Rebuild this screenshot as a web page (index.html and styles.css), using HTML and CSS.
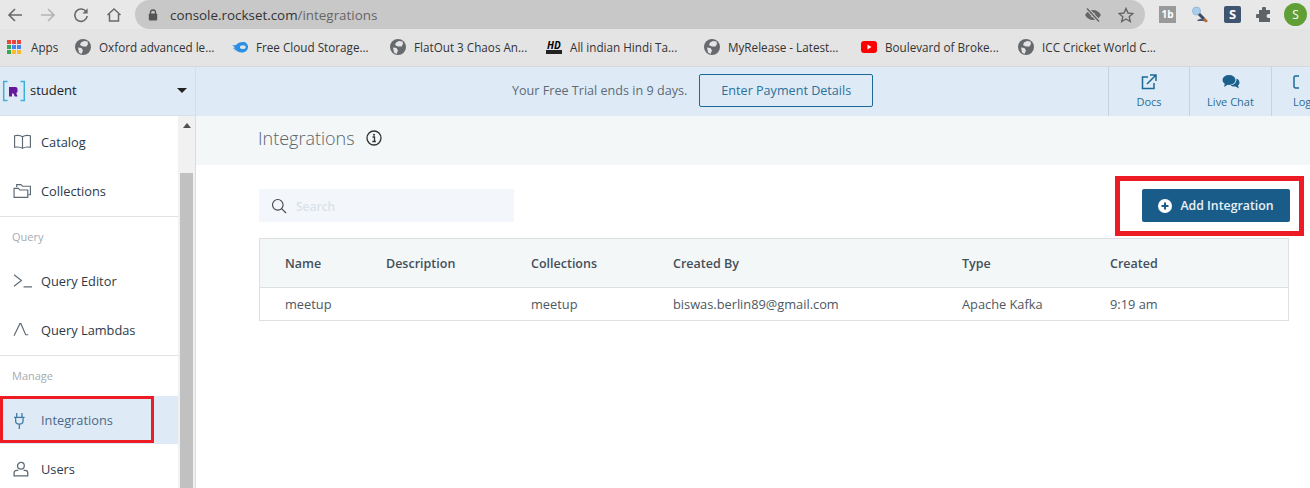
FILE: index.html
```html
<!DOCTYPE html>
<html>
<head>
<title>Integrations</title>
<meta http-equiv="content-type" content="text/html; charset=utf-8">
<link rel="stylesheet" href="styles.css">
</head>
<body>

<div class="toolbar">
	<div class="nav">
		<svg width="16" height="16" viewBox="0 0 16 16" class="nav_icon"><path d="M15 8H2M8 2L2 8l6 6" fill="none" stroke="#6a6a6a" stroke-width="1.6"/></svg>
		<svg width="16" height="16" viewBox="0 0 16 16" class="nav_icon"><path d="M1 8h13M8 2l6 6-6 6" fill="none" stroke="#b4b4b4" stroke-width="1.6"/></svg>
		<svg width="16" height="16" viewBox="0 0 16 16" class="nav_icon"><path d="M13.5 5.2A6.2 6.2 0 1 0 14.2 9" fill="none" stroke="#6a6a6a" stroke-width="1.6"/><path d="M14.6 1.2v5.2H9.4z" fill="#6a6a6a"/></svg>
		<svg width="16" height="16" viewBox="0 0 16 16" class="nav_icon"><path d="M1.5 8L8 2l6.5 6M3.5 7v7h9V7" fill="none" stroke="#6a6a6a" stroke-width="1.5"/></svg>
	</div>
	<div class="omnibox">
		<svg width="10" height="12" viewBox="0 0 10 12" class="lock"><path d="M2.5 5V3.500a2.500 2.500 0 0 1 5 0V5" fill="none" stroke="#555" stroke-width="1.3"/><rect x="0.8" y="4.6" width="8.4" height="6.8" rx="1" fill="#555"/></svg>
		<span class="url">console.rockset.com<span class="url_path">/integrations</span></span>
		<span class="omni_right">
			<svg width="18" height="16" viewBox="0 0 18 16"><path d="M1 8c2-3.400 4.800-5 8-5s6 1.600 8 5c-2 3.400-4.800 5-8 5s-6-1.600-8-5z" fill="#666"/><circle cx="9" cy="8" r="2.200" fill="#c8c8c8"/><path d="M3 1.500l12 13" stroke="#c8c8c8" stroke-width="3.400"/><path d="M3 1.500l12 13" stroke="#666" stroke-width="1.500"/></svg>
			<svg width="16" height="16" viewBox="0 0 16 16"><path d="M8 1.500l2 4.500 4.900.5-3.700 3.200 1.100 4.800L8 12l-4.300 2.500 1.100-4.800L1.100 6.500 6 6z" fill="none" stroke="#666" stroke-width="1.400"/></svg>
		</span>
	</div>
	<div class="extensions">
		<span class="ext ext_tb">1b</span>
		<svg width="18" height="18" viewBox="0 0 18 18" class="ext_search"><circle cx="5.500" cy="5" r="4" fill="#a9cdec" stroke="#9bb9d6" stroke-width="1"/><path d="M8 8l5 5" stroke="#3c4a63" stroke-width="3"/><path d="M11 14l3-2 3 3-2 1.500z" fill="#b5673a"/><path d="M6 14l6-2 1 3H7z" fill="#4a5a78"/></svg>
		<span class="ext ext_s">S</span>
		<svg width="16" height="16" viewBox="0 0 16 16"><path d="M6 1.500a2 2 0 0 1 4 0V3h4v4h-1.500a2 2 0 0 0 0 4H14v4H3v-4H1.500a2 2 0 0 1 0-4H3V3h3z" fill="#5f6368"/></svg>
		<span class="avatar">S</span>
	</div>
</div>

<div class="bookmarks">
	<span class="bm bm_apps">
		<span class="apps_grid"><i class="r"></i><i class="r"></i><i class="r"></i><i class="g"></i><i class="b"></i><i class="b"></i><i class="g"></i><i class="y"></i><i class="y"></i></span>
		Apps
	</span>
	<span class="bm bm_oxford"><svg class="globe" viewBox="0 0 16 16"><use href="#globe"/></svg>Oxford advanced le...</span>
	<span class="bm bm_cloud">
		<svg class="bm_icon" viewBox="0 0 16 16"><path d="M0 6.500L4 6C6 3.500 9 2.500 12 3c3 .6 4.200 3 4 5.500-.3 3-3 5-6.500 5-2.500 0-4.500-1-5.500-2.500L2 11.500 3.500 9.800 0.800 9.500 3 8z" fill="#2b8fe6"/><ellipse cx="10.800" cy="8.200" rx="2.800" ry="1.900" fill="#e4e4e4"/></svg>Free Cloud Storage...
	</span>
	<span class="bm bm_flat"><svg class="globe" viewBox="0 0 16 16"><use href="#globe"/></svg>FlatOut 3 Chaos An...</span>
	<span class="bm bm_hd"><span class="hd_icon">HD</span>All indian Hindi Ta...</span>
	<span class="bm bm_rel"><svg class="globe" viewBox="0 0 16 16"><use href="#globe"/></svg>MyRelease - Latest...</span>
	<span class="bm bm_yt">
		<svg class="bm_icon" viewBox="0 0 16 16"><rect y="2" width="16" height="12" rx="3" fill="#f00"/><path d="M6.500 5.500v5l4-2.500z" fill="#fff"/></svg>Boulevard of Broke...
	</span>
	<span class="bm"><svg class="globe" viewBox="0 0 16 16"><use href="#globe"/></svg>ICC Cricket World C...</span>
</div>

<svg width="0" height="0" class="defs">
	<symbol id="globe" viewBox="0 0 16 16">
		<circle cx="8" cy="8" r="8" fill="#666a6e"/>
		<path d="M12.500 2.500L9 2 6 3.500 5 6l3 1.500 3.500 0 1.500-2.500zM3 8.500l3.500.5 1.500 2.500L6.500 15 4 13.500z" fill="#e4e4e4"/>
	</symbol>
</svg>

<div class="app">
	<div class="sidebar">
		<div class="org">
			<svg width="24" height="24" viewBox="0 0 24 24" class="logo">
				<path d="M5.500 3.500H1.700v19h3.800M18.500 3.500h3.800v19h-3.800" fill="none" stroke="#3fb0d6" stroke-width="1.500"/>
				<path d="M7 9h6.500a2 2 0 0 1 2 2v3l-1.200 1 1.200 3.500h-2.800l-1.200-3h-1.500v3H7z" fill="#66189c"/>
			</svg>
			<span class="org_name">student</span>
			<span class="caret"></span>
		</div>
		<div class="side_body">
			<div class="menu">
				<a class="item item_first">
					<svg viewBox="0 0 18 18" class="item_icon"><path d="M9 4.500C7 3 4 3 1.500 3.500v11C4 14 7 14 9 15.500c2-1.500 5-1.500 7.500-1v-11C14 3 11 3 9 4.500zM9 4.500v11" fill="none" stroke="#5d6a75" stroke-width="1.100"/></svg>
					Catalog
				</a>
				<a class="item">
					<svg viewBox="0 0 18 18" class="item_icon"><path d="M3.500 6V3.500h4l1.500 1.500h7.500v8H14" fill="none" stroke="#5d6a75" stroke-width="1.100"/><path d="M1 7h4l1.500 1.500H14v7H1z" fill="none" stroke="#5d6a75" stroke-width="1.100"/></svg>
					Collections
				</a>
				<div class="group_label">Query</div>
				<a class="item">
					<svg viewBox="0 0 18 18" class="item_icon"><path d="M1 3.500L8 9l-7 5.500M10 15h8" fill="none" stroke="#5d6a75" stroke-width="1.100"/></svg>
					Query Editor
				</a>
				<a class="item">
					<svg viewBox="0 0 18 18" class="item_icon"><path d="M1 15L6.500 3.500H7.500L12 14h2.500" fill="none" stroke="#5d6a75" stroke-width="1.100"/></svg>
					Query Lambdas
				</a>
				<div class="group_label group_manage">Manage</div>
				<a class="item item_active">
					<svg viewBox="0 0 18 18" class="item_icon"><path d="M3.500 2v4M8.500 2v4M1 6h10M2.500 6v3.500c0 2 1.500 3 3.500 3s3.500-1 3.500-3V6M6 12.500V17" fill="none" stroke="#3f7ba4" stroke-width="1.200"/></svg>
					Integrations
				</a>
				<a class="item">
					<svg viewBox="0 0 18 18" class="item_icon"><circle cx="7.500" cy="6.500" r="3.200" fill="none" stroke="#5d6a75" stroke-width="1.200"/><path d="M5 10.800H3.500a2.500 2.500 0 0 0-2.500 2.500V16h13v-2.700a2.500 2.500 0 0 0-2.500-2.500H10" fill="none" stroke="#5d6a75" stroke-width="1.200"/></svg>
					Users
				</a>
			</div>
			<div class="scrollbar">
				<span class="scroll_up"></span>
				<div class="scroll_thumb"></div>
			</div>
		</div>
	</div>

	<div class="main">
		<div class="topbar">
			<span class="trial">Your Free Trial ends in 9 days.</span>
			<a class="pay_btn">Enter Payment Details</a>
			<div class="top_links">
				<a class="top_link">
					<svg width="16" height="16" viewBox="0 0 16 16"><path d="M7 3H1.500v11.500H13V9M6 10L14.500 1.500M9 1h6v6" fill="none" stroke="#1b6a96" stroke-width="1.500"/></svg>
					Docs
				</a>
				<a class="top_link top_link_chat">
					<svg width="18" height="16" viewBox="0 0 18 16"><ellipse cx="7" cy="6" rx="6.500" ry="5" fill="#1b5f8c"/><path d="M3 9l-1 4 4-2.500z" fill="#1b5f8c"/><path d="M14.500 4.500C16.500 5.500 17.500 7 17.500 8.500c0 1.300-.7 2.300-1.500 3l1 3-3.500-2c-2 .3-4-.2-5-1.300 3-.1 6.500-2.500 6-6.700z" fill="#1b5f8c"/></svg>
					Live Chat
				</a>
				<a class="top_link top_link_cut">
					<svg width="16" height="16" viewBox="0 0 16 16"><path d="M6 2H2.500A1.500 1.500 0 0 0 1 3.500v9A1.500 1.500 0 0 0 2.500 14H6" fill="none" stroke="#1b6a96" stroke-width="1.500"/></svg>
					Logout
				</a>
			</div>
		</div>

		<div class="page_title">
			<span class="title_text">Integrations</span>
			<svg width="16" height="16" viewBox="0 0 16 16"><circle cx="8" cy="8" r="7" fill="none" stroke="#333" stroke-width="1.300"/><circle cx="8" cy="4.800" r="1" fill="#333"/><path d="M6.500 7h2v4.500M6.300 11.500h3.600" fill="none" stroke="#333" stroke-width="1.300"/></svg>
		</div>

		<div class="content">
			<div class="actions">
				<div class="search">
					<svg width="16" height="16" viewBox="0 0 16 16"><circle cx="6.800" cy="6.800" r="5.300" fill="none" stroke="#444" stroke-width="1.100"/><path d="M10.600 10.600L15 15" stroke="#444" stroke-width="1.100"/></svg>
					<span class="search_text">Search</span>
				</div>
				<a class="add_btn">
					<svg width="14" height="14" viewBox="0 0 14 14"><circle cx="7" cy="7" r="7" fill="#fff"/><path d="M7 3.500v7M3.500 7h7" stroke="#1b5c8a" stroke-width="2"/></svg>
					Add Integration
				</a>
			</div>

			<table class="grid">
				<thead>
					<tr><th class="c_name">Name</th><th class="c_desc">Description</th><th class="c_coll">Collections</th><th class="c_by">Created By</th><th class="c_type">Type</th><th>Created</th></tr>
				</thead>
				<tbody>
					<tr><td>meetup</td><td></td><td>meetup</td><td>biswas.berlin89@gmail.com</td><td>Apache Kafka</td><td>9:19 am</td></tr>
				</tbody>
			</table>
		</div>
	</div>
</div>

<!-- red annotation boxes drawn over the screenshot -->
<div class="mark mark_side"></div>
<div class="mark mark_add"></div>

</body>
</html>
```

FILE: styles.css
```css
html, body {
	margin: 0;
	height: 488px;
	overflow: hidden;
}

body {
	position: relative;
	width: 1310px;
	font-family: "Open Sans", "Noto Sans", sans-serif;
	background: white;
}

a {
	display: block;
}

.defs {
	position: absolute;
}

/* browser chrome */

.toolbar {
	display: flex;
	align-items: center;
	height: 29px;
	background: #e8e8e8;
}

.nav {
	display: flex;
	gap: 17px;
	flex: 0 0 135px;
	padding-left: 7px;
	box-sizing: border-box;
}

.omnibox {
	display: flex;
	align-items: center;
	flex: 0 0 1010px;
	height: 29px;
	padding-left: 13px;
	box-sizing: border-box;
	border-radius: 15px;
	background: #c8c8c8;
}

.url {
	margin-left: 12px;
	font-size: 13.4px;
	color: #333;
}

.url_path {
	color: #666;
}

.omni_right {
	display: flex;
	gap: 16px;
	margin-left: auto;
	margin-right: 11px;
}

.extensions {
	display: flex;
	align-items: center;
	gap: 15px;
	padding-left: 14px;
}

.ext {
	display: block;
	width: 17px;
	height: 17px;
	text-align: center;
	color: white;
	font-weight: bold;
}

.ext_tb {
	font-size: 10px;
	line-height: 17px;
	background: #9a9a9a;
}

.ext_s {
	border-radius: 2px;
	font-size: 13px;
	line-height: 17px;
	background: #3e5470;
}

.avatar {
	width: 23px;
	height: 23px;
	margin-left: -3px;
	border-radius: 50%;
	text-align: center;
	color: white;
	font-size: 12px;
	line-height: 23px;
	background: #5f9f35;
}

.bookmarks {
	display: flex;
	align-items: center;
	height: 38px;
	padding: 0 0 2px 7px;
	border-bottom: 1px solid #d5d9dd;
	box-sizing: border-box;
	font-size: 11.7px;
	color: #333;
	background: #e4e4e4;
}

.bm {
	display: flex;
	align-items: center;
	gap: 8px;
	white-space: nowrap;
}

.bm_apps { width: 68px; gap: 10px; }
.bm_oxford { width: 157px; }
.bm_cloud { width: 158px; }
.bm_flat { width: 156px; }
.bm_hd { width: 158px; }
.bm_rel { width: 157px; }
.bm_yt { width: 157px; }

.apps_grid {
	display: grid;
	grid-template-columns: repeat(3, 4px);
	gap: 1px;
}

.apps_grid i {
	display: block;
	height: 4px;
}

.apps_grid .r { background: #e8453c; }
.apps_grid .y { background: #f9bb2d; }
.apps_grid .g { background: #34a853; }
.apps_grid .b { background: #4285f4; }

.globe, .bm_icon {
	width: 16px;
	height: 16px;
}

.hd_icon {
	width: 16px;
	height: 15px;
	font-size: 10px;
	font-weight: bold;
	font-style: italic;
	line-height: 12px;
	text-align: center;
	color: black;
	border-bottom: 4px solid #222;
	box-sizing: border-box;
}

/* rockset console */

.app {
	display: flex;
	height: 421px;
}

.sidebar {
	flex: 0 0 196px;
	border-right: 1px solid #d8dde2;
	box-sizing: border-box;
}

.org {
	display: flex;
	align-items: center;
	height: 49px;
	padding: 0 0 2px 2px;
	border-bottom: 1px solid #d8e2ea;
	box-sizing: border-box;
	background: #deebf7;
}

.org_name {
	margin-left: 4px;
	font-size: 13px;
	color: #222;
}

.caret {
	margin-left: auto;
	margin-right: 8px;
	border-left: 5px solid transparent;
	border-right: 5px solid transparent;
	border-top: 5px solid #222;
}

.side_body {
	display: flex;
	height: 372px;
}

.menu {
	flex: 0 0 178px;
	overflow: hidden;
}

.item {
	display: flex;
	align-items: center;
	height: 49px;
	padding-left: 13px;
	font-size: 12.8px;
	color: #2c3a47;
}

.item_first {
	margin-top: 1px;
}

.item_icon {
	width: 19px;
	height: 19px;
	margin-right: 9px;
}

.group_label {
	height: 40px;
	margin-top: 1px;
	line-height: 40px;
	padding-left: 12px;
	border-top: 1px solid #dfe3e6;
	box-sizing: border-box;
	font-size: 11px;
	color: #a5abb2;
}

.group_manage {
	height: 41px;
}

.item_active {
	height: 48px;
	color: #4a6a85;
	background: #deebf7;
}

.scrollbar {
	flex: 1;
	background: #f1f1f1;
}

.scroll_up {
	display: block;
	width: 0;
	margin: 7px auto 0 auto;
	border-left: 4px solid transparent;
	border-right: 4px solid transparent;
	border-bottom: 5px solid #505050;
}

.scroll_thumb {
	margin: 45px 2px 0 2px;
	height: 320px;
	background: #c1c1c1;
}

.main {
	flex: 1;
	min-width: 0;
}

.topbar {
	display: flex;
	align-items: center;
	height: 49px;
	padding-bottom: 2px;
	box-sizing: border-box;
	font-size: 12.6px;
	background: #deebf7;
}

.trial {
	margin-left: 316px;
	color: #5d6a75;
}

.pay_btn {
	width: 174px;
	height: 33px;
	margin-left: 12px;
	border: 1px solid #1b6a96;
	border-radius: 2px;
	box-sizing: border-box;
	text-align: center;
	line-height: 31px;
	color: #2a7099;
}

.top_links {
	display: flex;
	align-self: stretch;
	margin-left: auto;
	margin-bottom: -2px;
}

.top_link {
	display: flex;
	flex-direction: column;
	align-items: center;
	justify-content: center;
	gap: 4px;
	width: 81px;
	border-left: 1px solid #c8d3dc;
	box-sizing: border-box;
	font-size: 11px;
	font-weight: 500;
	color: #2a6c94;
}

.top_link_chat {
	width: 82px;
}

.top_link_cut {
	width: 39px;
	overflow: hidden;
	align-items: flex-start;
	padding-left: 21px;
}

.page_title {
	display: flex;
	align-items: center;
	gap: 11px;
	height: 49px;
	padding: 0 0 5px 62px;
	box-sizing: border-box;
	background: #f3f7f8;
}

.title_text {
	font-size: 18px;
	font-weight: 300;
	color: #5a636b;
}

.content {
	padding: 24px 21px 0 63px;
}

.actions {
	display: flex;
	justify-content: space-between;
	align-items: flex-start;
}

.search {
	display: flex;
	align-items: center;
	gap: 9px;
	width: 255px;
	height: 33px;
	padding: 1px 0 0 12px;
	box-sizing: border-box;
	background: #f3f7fb;
}

.search_text {
	font-size: 12px;
	font-weight: 600;
	color: #dbe2e9;
}

.add_btn {
	display: flex;
	align-items: center;
	justify-content: center;
	gap: 8px;
	width: 148px;
	height: 33px;
	margin-right: -1px;
	border-radius: 2px;
	font-size: 12.3px;
	font-weight: 600;
	color: #e8f0f6;
	background: #195c8a;
}

.grid {
	width: 100%;
	margin-top: 16px;
	border-collapse: collapse;
	border: 1px solid #dce0e3;
	font-size: 12.5px;
	text-align: left;
}

.grid th {
	height: 48px;
	padding: 0;
	border-bottom: 1px solid #dce0e3;
	font-weight: 600;
	color: #444f59;
	background: #f3f7f8;
}

.grid td {
	height: 32px;
	padding: 0;
	font-size: 12.8px;
	color: #4d5862;
}

.grid th:first-child, .grid td:first-child {
	padding-left: 25px;
}

.c_name { width: 101px; }
.c_desc { width: 145px; }
.c_coll { width: 142px; }
.c_by { width: 289px; }
.c_type { width: 148px; }

.mark {
	position: absolute;
	box-sizing: border-box;
	border: 5px solid #ed1c24;
}

.mark_side {
	left: 0;
	top: 396px;
	width: 154px;
	height: 47px;
	border-width: 3px;
}

.mark_add {
	left: 1115px;
	top: 176px;
	width: 189px;
	height: 60px;
}
```
